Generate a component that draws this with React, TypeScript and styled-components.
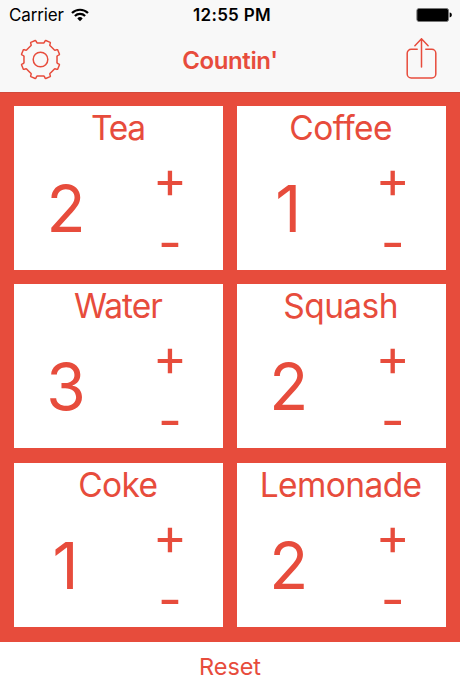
import React, { useState } from "react";
import styled, { createGlobalStyle } from "styled-components";

const RED = "#e74c3c";

const GlobalStyle = createGlobalStyle`
  * { box-sizing: border-box; }
  body { margin: 0; background: #fff; }
  button {
    font-family: inherit;
    color: inherit;
    background: none;
    border: 0;
    padding: 0;
    cursor: pointer;
  }
  svg { display: block; }
`;

const Screen = styled.div`
  width: 460px;
  height: 690px;
  display: flex;
  flex-direction: column;
  overflow: hidden;
  background: #fff;
  color: ${RED};
  font-family: Inter, "Liberation Sans", sans-serif;
`;

const Header = styled.header`
  height: 92px;
  flex: none;
  background: #f8f8f8;
`;

const StatusBar = styled.div`
  height: 30px;
  display: grid;
  grid-template-columns: 1fr auto 1fr;
  align-items: center;
  padding: 0 8px 0 9px;
  color: #000;
  font-size: 17px;
  line-height: 30px;
`;

const Carrier = styled.div`
  display: flex;
  align-items: center;
  gap: 7.5px;
  letter-spacing: -0.15px;
`;

const Time = styled.div`
  font-weight: 600;
  letter-spacing: 0.3px;
  padding-left: 3px;
`;

const BatterySlot = styled.div`
  display: flex;
  justify-content: flex-end;
`;

const NavBar = styled.nav`
  height: 62px;
  display: grid;
  grid-template-columns: 64px 1fr 64px;
  padding: 0 6px 0 8px;
`;

const IconButton = styled.button`
  height: 58px;
  display: flex;
  align-items: center;
  justify-content: center;
`;

const NavTitle = styled.h1`
  margin: 0;
  padding-right: 2px;
  text-align: center;
  font-size: 24px;
  font-weight: 600;
  line-height: 61px;
  letter-spacing: -0.4px;
`;

const Board = styled.main`
  height: 550px;
  flex: none;
  display: grid;
  grid-template-columns: 1fr 1fr;
  grid-template-rows: repeat(3, 164px);
  gap: 14.3px;
  padding: 14.2px 14.4px;
  background: ${RED};
  box-shadow: inset 0 1px 0 #d1493b;
`;

const Card = styled.section`
  background: #fff;
  display: flex;
  flex-direction: column;
`;

const CardTitle = styled.h2<{ $tracking: number }>`
  margin: 0;
  height: 42px;
  padding-right: 1.5px;
  line-height: 44px;
  text-align: center;
  font-size: 33.5px;
  font-weight: 400;
  letter-spacing: ${(p) => p.$tracking}px;
`;

const CardBody = styled.div`
  flex: 1;
  display: grid;
  grid-template-columns: 1fr 1fr;
`;

const Count = styled.div<{ $narrow: boolean }>`
  padding-top: 21px;
  padding-right: ${(p) => (p.$narrow ? 2 : 1)}px;
  text-align: center;
  font-size: 64px;
  line-height: 80px;
`;

const Stepper = styled.div`
  display: flex;
  flex-direction: column;
  padding-right: 1.5px;
`;

const StepButton = styled.button`
  height: 63px;
  font-size: 52px;
  line-height: 63px;
`;

const ResetButton = styled.button`
  flex: 1;
  font-size: 23.5px;
  letter-spacing: -0.1px;
`;

function WifiIcon() {
  return (
    <svg width="18" height="14" viewBox="0 0 18 14" fill="none" stroke="#000" strokeWidth="2.2">
      <path d="M1 5.1a11.2 11.2 0 0 1 16 0" />
      <path d="M3.9 8a7.2 7.2 0 0 1 10.2 0" />
      <path d="M9 13.2 6.3 10.4a3.8 3.8 0 0 1 5.4 0Z" fill="#000" stroke="none" />
    </svg>
  );
}

function BatteryIcon() {
  return (
    <svg width="36" height="14" viewBox="0 0 36 14">
      <rect x="0.9" y="0.5" width="31.6" height="13" rx="2" fill="#000" stroke="#777" />
      <path d="M33.6 4.6c1.6.3 2.2 1.2 2.2 2.4s-.6 2.1-2.2 2.4Z" fill="#000" />
    </svg>
  );
}

const gearPoint = (radius: number, degrees: number) => {
  const a = (degrees * Math.PI) / 180;
  return `${(20.5 + radius * Math.sin(a)).toFixed(2)} ${(20.5 - radius * Math.cos(a)).toFixed(2)}`;
};

const gearPath =
  Array.from({ length: 8 }, (_, k) => {
    const c = 22.5 + 45 * k;
    return [
      `${k === 0 ? "M" : "L"}${gearPoint(16.8, c - 11.5)}`,
      `Q${gearPoint(17.6, c - 9)} ${gearPoint(19.2, c - 8.5)}`,
      `L${gearPoint(19.7, c - 7)}`,
      `L${gearPoint(19.7, c + 7)}`,
      `L${gearPoint(19.2, c + 8.5)}`,
      `Q${gearPoint(17.6, c + 9)} ${gearPoint(16.8, c + 11.5)}`,
      `Q${gearPoint(16.6, c + 22.5)} ${gearPoint(16.8, c + 33.5)}`,
    ].join("");
  }).join("") + "Z";

function GearIcon() {
  return (
    <svg width="41" height="41" viewBox="0 0 41 41" fill="none" stroke={RED} strokeWidth="1.5" strokeLinejoin="round">
      <path d={gearPath} />
      <circle cx="20.5" cy="20.5" r="7.3" />
    </svg>
  );
}

function ShareIcon() {
  return (
    <svg width="32" height="42" viewBox="0 0 32 42" fill="none" stroke={RED} strokeWidth="1.5" strokeLinecap="round">
      <path d="M11.2 11.300H5.200a4 4 0 0 0-4 4v20.600a4 4 0 0 0 4 4h20.600a4 4 0 0 0 4-4V15.300a4 4 0 0 0-4-4h-6" />
      <path d="M15.500 29V1M8.900 7.700l6.600-6.900 6.600 6.900" />
    </svg>
  );
}

const initialItems = [
  { name: "Tea", count: 2, tracking: -1.3 },
  { name: "Coffee", count: 1, tracking: -0.6 },
  { name: "Water", count: 3, tracking: -1 },
  { name: "Squash", count: 2, tracking: -0.6 },
  { name: "Coke", count: 1, tracking: -0.6 },
  { name: "Lemonade", count: 2, tracking: -0.6 },
];

export default function App() {
  const [items, setItems] = useState(initialItems);

  const step = (name: string, delta: number) =>
    setItems((list) =>
      list.map((item) =>
        item.name === name ? { ...item, count: Math.max(0, item.count + delta) } : item
      )
    );

  return (
    <>
      <GlobalStyle />
      <Screen>
        <Header>
          <StatusBar>
            <Carrier>
              Carrier
              <WifiIcon />
            </Carrier>
            <Time>12:55 PM</Time>
            <BatterySlot>
              <BatteryIcon />
            </BatterySlot>
          </StatusBar>
          <NavBar>
            <IconButton aria-label="Settings">
              <GearIcon />
            </IconButton>
            <NavTitle>Countin'</NavTitle>
            <IconButton aria-label="Share">
              <ShareIcon />
            </IconButton>
          </NavBar>
        </Header>
        <Board>
          {items.map((item) => (
            <Card key={item.name}>
              <CardTitle $tracking={item.tracking}>{item.name}</CardTitle>
              <CardBody>
                <Count $narrow={item.count === 1}>{item.count}</Count>
                <Stepper>
                  <StepButton onClick={() => step(item.name, 1)}>+</StepButton>
                  <StepButton onClick={() => step(item.name, -1)}>-</StepButton>
                </Stepper>
              </CardBody>
            </Card>
          ))}
        </Board>
        <ResetButton onClick={() => setItems((list) => list.map((i) => ({ ...i, count: 0 })))}>
          Reset
        </ResetButton>
      </Screen>
    </>
  );
}
